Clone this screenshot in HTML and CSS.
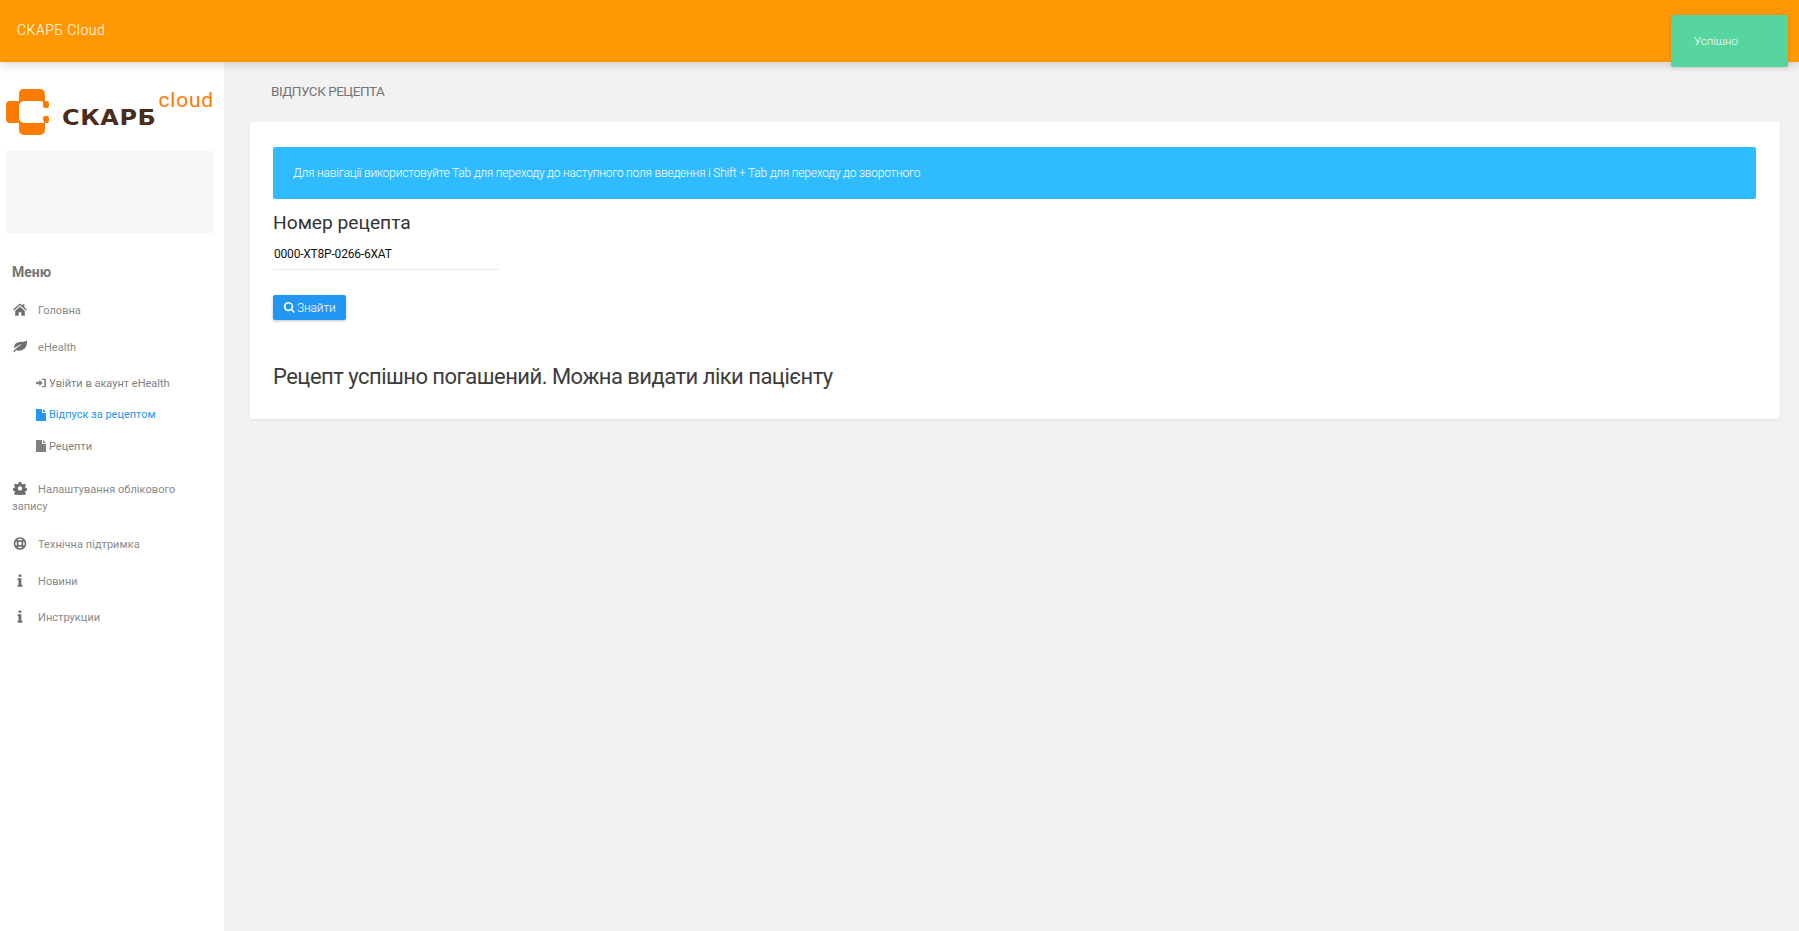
FILE: index.html
```html
<!DOCTYPE html>
<html lang="uk">
<head>
<meta charset="utf-8">
<title>СКАРБ Cloud</title>
<link rel="stylesheet" href="styles.css">
</head>
<body>
<header class="topbar"><span class="brand">СКАРБ Cloud</span></header>
<div class="toast">Успішно</div>
<div class="layout">
  <aside class="sidebar">
    <div class="logo">
      <svg class="logo-mark" viewBox="0 0 43 46" width="43" height="46">
        <path fill="#ff7a00" d="M17 0h17a5 5 0 0 1 5 5v7H18a5 5 0 0 0-5 5v12a5 5 0 0 0 5 5h21v7a5 5 0 0 1-5 5H18a5 5 0 0 1-5-5v-7H4a4 4 0 0 1-4-4V16a4 4 0 0 1 4-4h9V5a5 5 0 0 1 4-5z"/>
        <path fill="#ff7a00" d="M38 12h3a2 2 0 0 1 2 2v3a2 2 0 0 1-2 2h-2a2 2 0 0 1-2-2v-2a3 3 0 0 0-1-3zM39 27h2a2 2 0 0 1 2 2v3a2 2 0 0 1-2 2h-3a3 3 0 0 0-1-3v-2a2 2 0 0 1 2-2z"/>
      </svg>
      <span class="logo-name">СКАРБ</span>
      <span class="logo-cloud">cloud</span>
    </div>
    <div class="profile-box"></div>
    <div class="menu-title">Меню</div>
    <nav class="menu">
      <a class="menu-item">
        <svg class="ico" viewBox="0 0 16 14"><path d="M8 0 0 7l1 1.200L8 2.200l7 6L16 7l-3-2.600V1h-2v1.700zM2.500 8.500V14h4v-4h3v4h4V8.500L8 3.800z"/></svg>Головна</a>
      <a class="menu-item">
        <svg class="ico" viewBox="0 0 16 14"><path d="M16 0c-2 1.800-5.500 1.200-9 1.800C2.500 2.600.8 5.800 1.600 9.300 4 6.500 7 4.800 10.500 4.300 7.500 5.800 3.500 8.300.5 12.500l1 1.300 1.900-2.400c3.300 1 7 .4 9.600-1.700C15.600 7.500 16.200 3.500 16 0z"/></svg>eHealth</a>
      <div class="submenu">
        <a class="sub-item">
          <svg class="sub-ico" viewBox="0 0 12 12"><path d="M0 4.500h4V2l4 4-4 4V7.500H0zM7 1h3.500A1.500 1.500 0 0 1 12 2.500v7a1.500 1.500 0 0 1-1.500 1.500H7V9.700h3V2.300H7z"/></svg>Увійти в акаунт eHealth</a>
        <a class="sub-item active">
          <svg class="sub-ico" viewBox="0 0 10 12"><path d="M0 0h6v4h4v8H0zM7 0l3 3H7z"/></svg>Відпуск за рецептом</a>
        <a class="sub-item">
          <svg class="sub-ico" viewBox="0 0 10 12"><path d="M0 0h6v4h4v8H0zM7 0l3 3H7z"/></svg>Рецепти</a>
      </div>
      <a class="menu-item wrap">
        <svg class="ico" viewBox="0 0 14 14"><path fill-rule="evenodd" d="M5.700 0h2.600l.4 2 1.300.6 1.700-1.100 1.800 1.800-1.100 1.700.6 1.300 2 .4v2.600l-2 .4-.6 1.300 1.100 1.700-1.800 1.800-1.700-1.100-1.300.6-.4 2H5.700l-.4-2-1.300-.6-1.700 1.100L.5 12.700l1.100-1.700-.6-1.300-2-.4V6.700l2-.4.6-1.300L.5 3.300l1.800-1.800L4 2.600l1.300-.6zM7 4.700a2.300 2.300 0 1 0 0 4.600 2.300 2.300 0 0 0 0-4.600z"/></svg>Налаштування облікового запису</a>
      <a class="menu-item">
        <svg class="ico ring" viewBox="0 0 14 14">
          <circle class="ring-band" cx="7" cy="7" r="5.900"/>
          <circle class="ring-band" cx="7" cy="7" r="2.700"/>
          <path class="ring-spoke" d="M2.800 2.800 5 5M11.200 2.800 9 5M2.800 11.200 5 9M11.200 11.200 9 9"/>
        </svg>Технічна підтримка</a>
      <a class="menu-item">
        <svg class="ico" viewBox="0 0 16 14"><path d="M6.300 0h3.200v2.700H6.300zM5.300 4.500h4.200V11.800h1.200V14H5.300v-2.200h1V6.700h-1z"/></svg>Новини</a>
      <a class="menu-item">
        <svg class="ico" viewBox="0 0 16 14"><path d="M6.300 0h3.200v2.700H6.300zM5.300 4.500h4.200V11.800h1.200V14H5.300v-2.200h1V6.700h-1z"/></svg>Инструкции</a>
    </nav>
  </aside>
  <main class="content">
    <h1 class="page-title">ВІДПУСК РЕЦЕПТА</h1>
    <section class="card">
      <div class="alert">Для навігації використовуйте Tab для переходу до наступного поля введення і Shift + Tab для переходу до зворотного</div>
      <label class="field-label" for="rx">Номер рецепта</label>
      <input class="field-input" id="rx" type="text" value="0000-XT8P-0266-6XAT">
      <button class="btn" type="button">
        <svg class="btn-ico" viewBox="0 0 12 12"><path fill-rule="evenodd" d="M5 0a5 5 0 0 1 4 8l3 3-1.200 1-3-3A5 5 0 1 1 5 0zm0 1.700a3.300 3.300 0 1 0 0 6.600 3.300 3.300 0 0 0 0-6.600z"/></svg>Знайти</button>
      <h3 class="result">Рецепт успішно погашений. Можна видати ліки пацієнту</h3>
    </section>
  </main>
</div>
</body>
</html>
```
FILE: styles.css
```css
* { box-sizing: border-box; }
html, body { height: 100%; }
body {
  margin: 0;
  height: 931px;
  overflow: hidden;
  display: flex;
  flex-direction: column;
  font-family: Roboto, "Liberation Sans", sans-serif;
  background: #f2f2f2;
  color: #333;
}
.topbar {
  height: 62px;
  flex: none;
  background: #ff9800;
  display: flex;
  align-items: center;
  padding: 0 0 2px 17px;
  position: relative;
  z-index: 2;
  box-shadow: 0 2px 10px rgba(0,0,0,.18);
}
.brand { color: #fff; font-size: 14px; font-weight: 300; letter-spacing: .45px; }
.toast {
  position: absolute;
  top: 15px;
  left: 1671px;
  width: 117px;
  height: 52px;
  padding: 19px 0 0 23px;
  background: #57d59f;
  border-radius: 2px;
  color: #fff;
  font-size: 11.500px;
  font-weight: 300;
  line-height: 14px;
  z-index: 3;
  box-shadow: 0 1px 4px rgba(0,0,0,.12);
}
.layout { flex: 1; display: flex; min-height: 0; }
.sidebar {
  width: 224px;
  flex: none;
  background: #fff;
  padding: 27px 10px 0 6px;
}
.logo { height: 46px; display: flex; align-items: flex-end; position: relative; }
.logo-mark { flex: none; }
.logo-name {
  margin: 0 0 7px 13px;
  font-family: "DejaVu Sans", sans-serif;
  font-weight: 700;
  font-size: 21px;
  line-height: 20px;
  letter-spacing: .5px;
  color: #4a2c1c;
  transform: scaleX(1.14);
  transform-origin: left center;
}
.logo-cloud {
  position: absolute;
  top: 1px;
  right: 0;
  font-family: Roboto, sans-serif;
  font-size: 21px;
  line-height: 20px;
  letter-spacing: .8px;
  color: #ff7a00;
}
.profile-box { height: 82px; width: 207px; margin-top: 16px; background: #f6f6f6; }
.menu-title { margin: 31px 0 0 6px; font-size: 14px; line-height: 16px; font-weight: 700; color: #757575; }
.menu { margin-top: 12px; display: block; }
.menu-item {
  display: block;
  height: 36.500px;
  padding: 11px 0 0 6px;
  font-size: 11px;
  line-height: 15px;
  letter-spacing: .05px;
  color: #888;
}
.menu-item.wrap { height: 56px; padding: 11px 20px 0 6px; line-height: 17px; }
.ico { width: 14px; height: 13px; fill: #6e6e6e; margin: 0 11px 0 1px; vertical-align: -2px; }
.ring { fill: none; }
.ring-band { fill: none; stroke: #6e6e6e; stroke-width: 1.800; }
.ring-spoke { fill: none; stroke: #6e6e6e; stroke-width: 2.400; }
.submenu { margin: 0 0 8px; padding: 2.500px 0 0 30px; }
.sub-item {
  display: flex;
  align-items: center;
  height: 31.500px;
  font-size: 11px;
  color: #808080;
}
.sub-item.active { color: #2196f3; }
.sub-ico { width: 10px; height: 12px; fill: currentColor; margin-right: 3px; flex: none; }
.content { flex: 1; padding: 0 19px 0 26px; min-width: 0; }
.page-title {
  margin: 0;
  padding: 21px 0 0 21px;
  height: 60px;
  font-size: 13.500px;
  line-height: 16px;
  font-weight: 400;
  letter-spacing: -.5px;
  color: #757575;
}
.card {
  height: 297px;
  background: #fff;
  border-radius: 3px;
  padding: 25px 24px 0 23px;
  box-shadow: 0 1px 3px rgba(0,0,0,.08);
}
.alert {
  height: 52px;
  padding: 19px 20px 0;
  background: #2fbcff;
  border-radius: 2px;
  color: #fff;
  font-size: 12px;
  line-height: 15px;
  letter-spacing: -.23px;
  font-weight: 300;
}
.field-label {
  display: block;
  margin-top: 12px;
  font-size: 19.200px;
  line-height: 24px;
  color: #333;
}
.field-input {
  display: block;
  width: 226px;
  height: 34px;
  margin-top: 1px;
  padding: 3px 1px 0;
  border: 0;
  border-bottom: 1px solid #e9e9e9;
  outline: 0;
  background: transparent;
  font-family: inherit;
  font-size: 12px;
  letter-spacing: -.2px;
  color: #111;
}
.btn {
  display: flex;
  align-items: center;
  width: 73px;
  height: 25px;
  margin-top: 25px;
  padding: 0 0 0 11px;
  border: 0;
  border-radius: 2px;
  background: #2196f3;
  color: #fff;
  font-family: inherit;
  font-size: 12px;
  letter-spacing: -.15px;
  font-weight: 300;
  box-shadow: 0 1px 3px rgba(0,0,0,.25);
}
.btn-ico { width: 11px; height: 11px; fill: #fff; margin-right: 2px; flex: none; }
.result {
  margin: 43px 0 0;
  font-size: 22px;
  line-height: 28px;
  font-weight: 400;
  letter-spacing: -.52px;
  color: #3c3c3c;
}
```
